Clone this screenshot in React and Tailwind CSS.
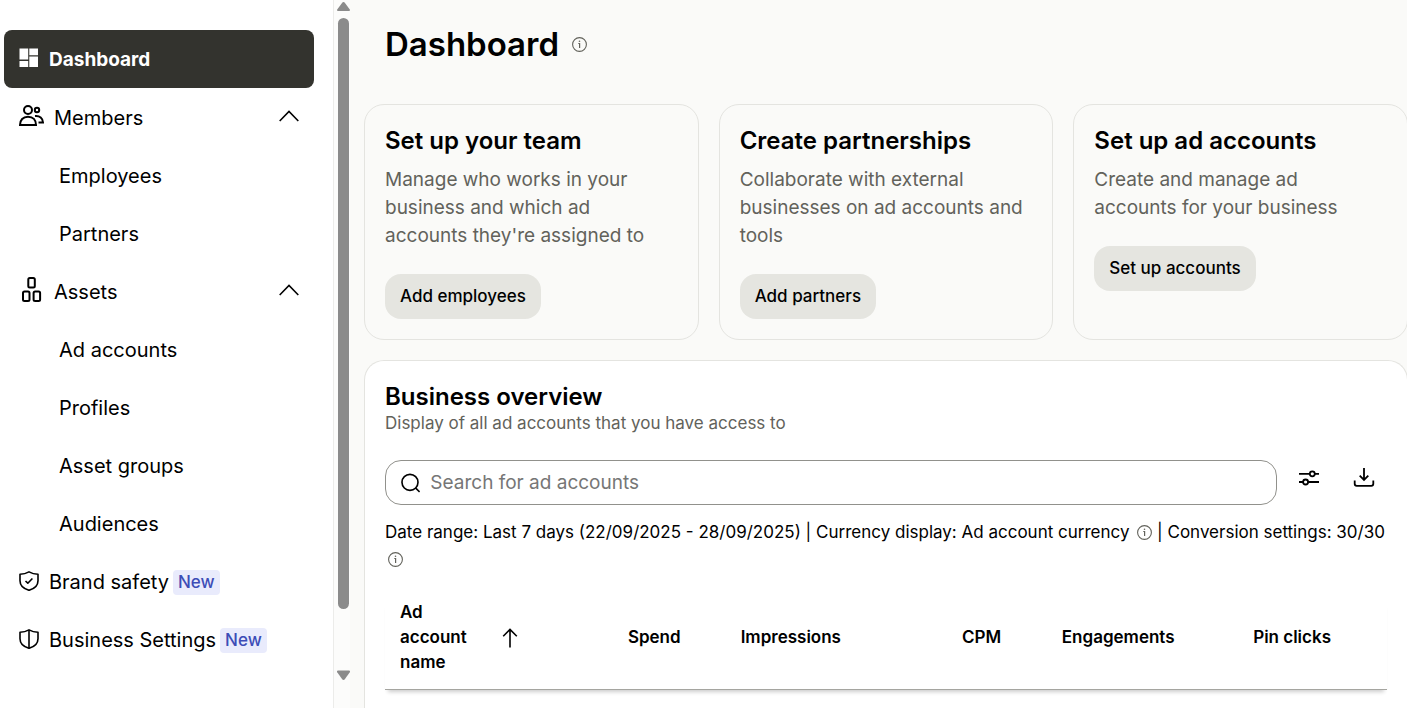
const navItems = [
  { label: 'Dashboard', icon: DashboardIcon, active: true },
  { label: 'Members', icon: MembersIcon, children: ['Employees', 'Partners'] },
  { label: 'Assets', icon: AssetsIcon, children: ['Ad accounts', 'Profiles', 'Asset groups', 'Audiences'] },
  { label: 'Brand safety', icon: ShieldCheckIcon, isNew: true },
  { label: 'Business Settings', icon: ShieldIcon, isNew: true },
];

const cards = [
  {
    title: 'Set up your team',
    text: "Manage who works in your business and which ad accounts they're assigned to",
    action: 'Add employees',
  },
  {
    title: 'Create partnerships',
    text: 'Collaborate with external businesses on ad accounts and tools',
    action: 'Add partners',
  },
  {
    title: 'Set up ad accounts',
    text: 'Create and manage ad accounts for your business',
    action: 'Set up accounts',
  },
];

const columns = ['Spend', 'Impressions', 'CPM', 'Engagements', 'Pin clicks'];

function DashboardIcon() {
  return (
    <svg width="20" height="22" viewBox="0 0 20 22" fill="currentColor" aria-hidden="true">
      <path d="M.5.500h8.700v11H.5zM10.300.500h8.700v6.700h-8.700zM.5 13h8.700v6H.5zM10.300 8.500h8.700V19h-8.700z" />
    </svg>
  );
}

function MembersIcon() {
  return (
    <svg width="26" height="24" viewBox="0 0 26 24" fill="none" stroke="currentColor" strokeWidth="2" aria-hidden="true">
      <circle cx="10" cy="5" r="4" />
      <circle cx="19" cy="5" r="2.200" />
      <path d="M2 20c0-5 3-8.300 8-8.300s8 3.300 8 8.300zM17 11c4.800-.5 7.800 2.200 8 6.500h-4.500" />
    </svg>
  );
}

function AssetsIcon() {
  return (
    <svg width="26" height="28" viewBox="0 0 26 28" fill="none" stroke="currentColor" strokeWidth="2" aria-hidden="true">
      <rect x="10.300" y="1" width="6.500" height="9.500" rx="1.500" />
      <rect x="5" y="14.500" width="6.500" height="9.500" rx="1.500" />
      <rect x="15.600" y="14.500" width="6.500" height="9.500" rx="1.500" />
    </svg>
  );
}

const SHIELD = 'M10 .9C7 2.600 4.300 3.200 1 3.300v6.400c0 5 3.500 8 9 9.600 5.500-1.600 9-4.600 9-9.600V3.300C15.700 3.200 13 2.600 10 .9z';

function ShieldCheckIcon() {
  return (
    <svg width="20" height="20" viewBox="0 0 20 20" fill="none" stroke="currentColor" strokeWidth="1.600" strokeLinejoin="round" aria-hidden="true">
      <path d={SHIELD} />
      <path d="M6.500 10l2.300 2.200 4.600-4.700" />
    </svg>
  );
}

function ShieldIcon() {
  return (
    <svg width="20" height="20" viewBox="0 0 20 20" fill="none" stroke="currentColor" strokeWidth="1.600" strokeLinejoin="round" aria-hidden="true">
      <path d={SHIELD} />
      <path d="M10 1v18" />
    </svg>
  );
}

function ChevronUpIcon() {
  return (
    <svg width="20" height="14" viewBox="0 0 20 14" fill="none" stroke="currentColor" strokeWidth="1.600" aria-hidden="true">
      <path d="M.7 11 10 1.500l9.300 9.500" />
    </svg>
  );
}

function InfoIcon() {
  return (
    <svg width="15" height="15" viewBox="0 0 15 15" fill="none" stroke="currentColor" aria-hidden="true">
      <circle cx="7.500" cy="7.500" r="6.900" strokeWidth="1.100" />
      <path d="M6.300 6.500h1.300v4.500" strokeWidth="1.200" />
      <circle cx="7.500" cy="4.300" r=".8" fill="currentColor" stroke="none" />
    </svg>
  );
}

function SearchIcon() {
  return (
    <svg width="20" height="20" viewBox="0 0 20 20" fill="none" stroke="currentColor" strokeWidth="1.700" aria-hidden="true">
      <circle cx="9.300" cy="9.300" r="8.300" />
      <path d="m15 15 4.300 4.300" />
    </svg>
  );
}

function FilterIcon() {
  return (
    <svg width="20" height="20" viewBox="0 0 20 20" fill="none" stroke="currentColor" strokeWidth="1.800" aria-hidden="true">
      <circle cx="13.300" cy="5.800" r="2.500" />
      <circle cx="6.600" cy="14" r="2.500" />
      <path d="M0 5.800h10.800M15.800 5.800H20M0 14h4.100M9.100 14H20" />
    </svg>
  );
}

function DownloadIcon() {
  return (
    <svg width="22" height="20" viewBox="0 0 22 20" fill="none" stroke="currentColor" strokeWidth="1.800" aria-hidden="true">
      <path d="M11 0v12M6.700 7.700l4.300 4.200 4.300-4.200M1.700 12.500v3.300a2 2 0 0 0 2 2h14.600a2 2 0 0 0 2-2v-3.300" />
    </svg>
  );
}

function ArrowUpIcon() {
  return (
    <svg width="16" height="20" viewBox="0 0 16 20" fill="none" stroke="currentColor" strokeWidth="1.600" aria-hidden="true">
      <path d="M8 19.500V1.500M1.200 8.200 8 1.400l6.800 6.800" />
    </svg>
  );
}

function NavItem({ label, icon: Icon, active, children, isNew }) {
  if (children) {
    return (
      <li>
        <button type="button" aria-expanded="true" className="flex h-[58px] w-full items-center gap-2.5 pl-3.5 pr-[15px] text-left">
          <Icon />
          <span className="flex-1 pt-0.5">{label}</span>
          <ChevronUpIcon />
        </button>
        <ul>
          {children.map((child) => (
            <li key={child}>
              <a href="#" className="flex h-[58px] items-center pt-0.5 pl-[55px]">{child}</a>
            </li>
          ))}
        </ul>
      </li>
    );
  }

  return (
    <li>
      <a
        href="#"
        className={`flex h-[58px] items-center px-[15px] ${
          active ? 'rounded-lg bg-[#33332e] text-[19px] font-bold text-white' : ''
        }`}
      >
        <Icon />
        <span className="ml-2.5 pt-0.5">{label}</span>
        {isNew && (
          <span className="ml-1 mt-0.5 rounded bg-[#e9ebfc] px-[5px] text-[17px] leading-[25px] font-medium text-[#3d4db7]">New</span>
        )}
      </a>
    </li>
  );
}

function Sidebar() {
  return (
    <nav className="w-[334px] shrink-0 border-r border-[#ececea] bg-white pt-[30px] pl-1 pr-[19px] text-xl">
      <ul>
        {navItems.map((item) => (
          <NavItem key={item.label} {...item} />
        ))}
      </ul>
    </nav>
  );
}

function ScrollRail() {
  return (
    <div className="flex h-screen w-4 shrink-0 flex-col items-center bg-[#fcfcfb] pt-0.5 pb-7 pr-px pl-1 text-[#8b8b8b]" aria-hidden="true">
      <svg width="13" height="9" viewBox="0 0 13 9" fill="currentColor">
        <path d="M6.500 0c.6 0 1 .3 1.300.7l5 6.800c.5.800.1 1.500-.8 1.500H1C.1 9-.3 8.300.2 7.500l5-6.800c.3-.4.700-.7 1.300-.7z" />
      </svg>
      <div className="mt-[7px] w-[11px] grow-[10] rounded-full bg-[#8b8b8b]" />
      <div className="h-0.5 grow" />
      <svg width="13" height="10" viewBox="0 0 13 10" fill="currentColor">
        <path d="M6.500 10c-.6 0-1-.3-1.300-.7l-5-7C-.3 1.500.1.500 1 .5h11c.9 0 1.300 1 .8 1.800l-5 7c-.3.400-.7.700-1.300.7z" />
      </svg>
    </div>
  );
}

function SetupCard({ title, text, action }) {
  return (
    <section className="rounded-[20px] border border-[#e4e4e0] p-5">
      <h2 className="text-2xl leading-8 font-semibold">{title}</h2>
      <p className="mt-[9px] pr-1 text-[19px] leading-7 text-[#62625b]">{text}</p>
      <button type="button" className="mt-6 h-[45px] rounded-2xl bg-[#e5e5e0] px-[15px] text-[17px] font-medium">
        {action}
      </button>
    </section>
  );
}

function InfoButton({ label }) {
  return (
    <button type="button" aria-label={label} className="ml-[3px] inline-block align-[-2px] text-[#62625b]">
      <InfoIcon />
    </button>
  );
}

function Overview() {
  return (
    <section className="mt-5 grow rounded-t-[20px] border border-b-0 border-[#e4e4e0] bg-white px-5 pt-5">
      <h2 className="text-2xl leading-8 font-semibold">Business overview</h2>
      <p className="text-[17px] leading-5 text-[#62625b]">Display of all ad accounts that you have access to</p>

      <div className="mt-[27px] flex items-start">
        <label className="flex h-[45px] flex-1 items-center gap-2.5 rounded-2xl border border-[#91918c] px-[15px]">
          <SearchIcon />
          <input
            type="search"
            aria-label="Search for ad accounts"
            placeholder="Search for ad accounts"
            className="w-full bg-transparent pt-0.5 text-[19px] outline-none placeholder:text-[#767676]"
          />
        </label>
        <button type="button" aria-label="Filter" className="ml-[22px] mt-2">
          <FilterIcon />
        </button>
        <button type="button" aria-label="Download" className="ml-[34px] mr-3 mt-2">
          <DownloadIcon />
        </button>
      </div>

      <p className="mt-3.5 text-[17px] leading-[27px]">
        Date range: Last 7 days (22/09/2025 - 28/09/2025) | Currency display: Ad account currency{' '}
        <InfoButton label="About currency" /> | Conversion settings: 30/30{' '}
        <InfoButton label="About conversion settings" />
      </p>

      <table className="mt-[27px] w-full table-fixed text-[17px] leading-[25px]">
        <colgroup>
          <col className="w-[15%]" />
          <col className="w-[16%]" />
          <col className="w-[16%]" />
          <col className="w-[16%]" />
          <col className="w-[17%]" />
          <col />
        </colgroup>
        <thead>
          <tr className="border-b border-[#a5a5a0] shadow-[0_5px_4px_-3px_rgba(0,0,0,0.2)]">
            <th className="pt-0 pb-3.5 pl-[15px] text-left font-semibold" aria-sort="ascending">
              <button type="button" className="flex items-center gap-8 text-left">
                <span className="w-[70px]">Ad account name</span>
                <ArrowUpIcon />
              </button>
            </th>
            {columns.map((column) => (
              <th key={column} className="pb-3.5 pr-[15px] text-right font-semibold nth-5:pr-3 last:pr-14">{column}</th>
            ))}
          </tr>
        </thead>
      </table>
    </section>
  );
}

export default function App() {
  return (
    <div className="flex h-screen overflow-hidden bg-[#fafaf8] font-['Inter',sans-serif] text-black">
      <Sidebar />
      <ScrollRail />
      <main className="-mr-px flex min-w-0 flex-1 flex-col pl-3.5">
        <header className="flex items-center gap-2.5 pt-5 pl-[21px]">
          <h1 className="text-[33px] leading-[48px] font-semibold">Dashboard</h1>
          <InfoButton label="About the dashboard" />
        </header>
        <div className="mt-9 grid grid-cols-3 gap-5">
          {cards.map((card) => (
            <SetupCard key={card.title} {...card} />
          ))}
        </div>
        <Overview />
      </main>
    </div>
  );
}
